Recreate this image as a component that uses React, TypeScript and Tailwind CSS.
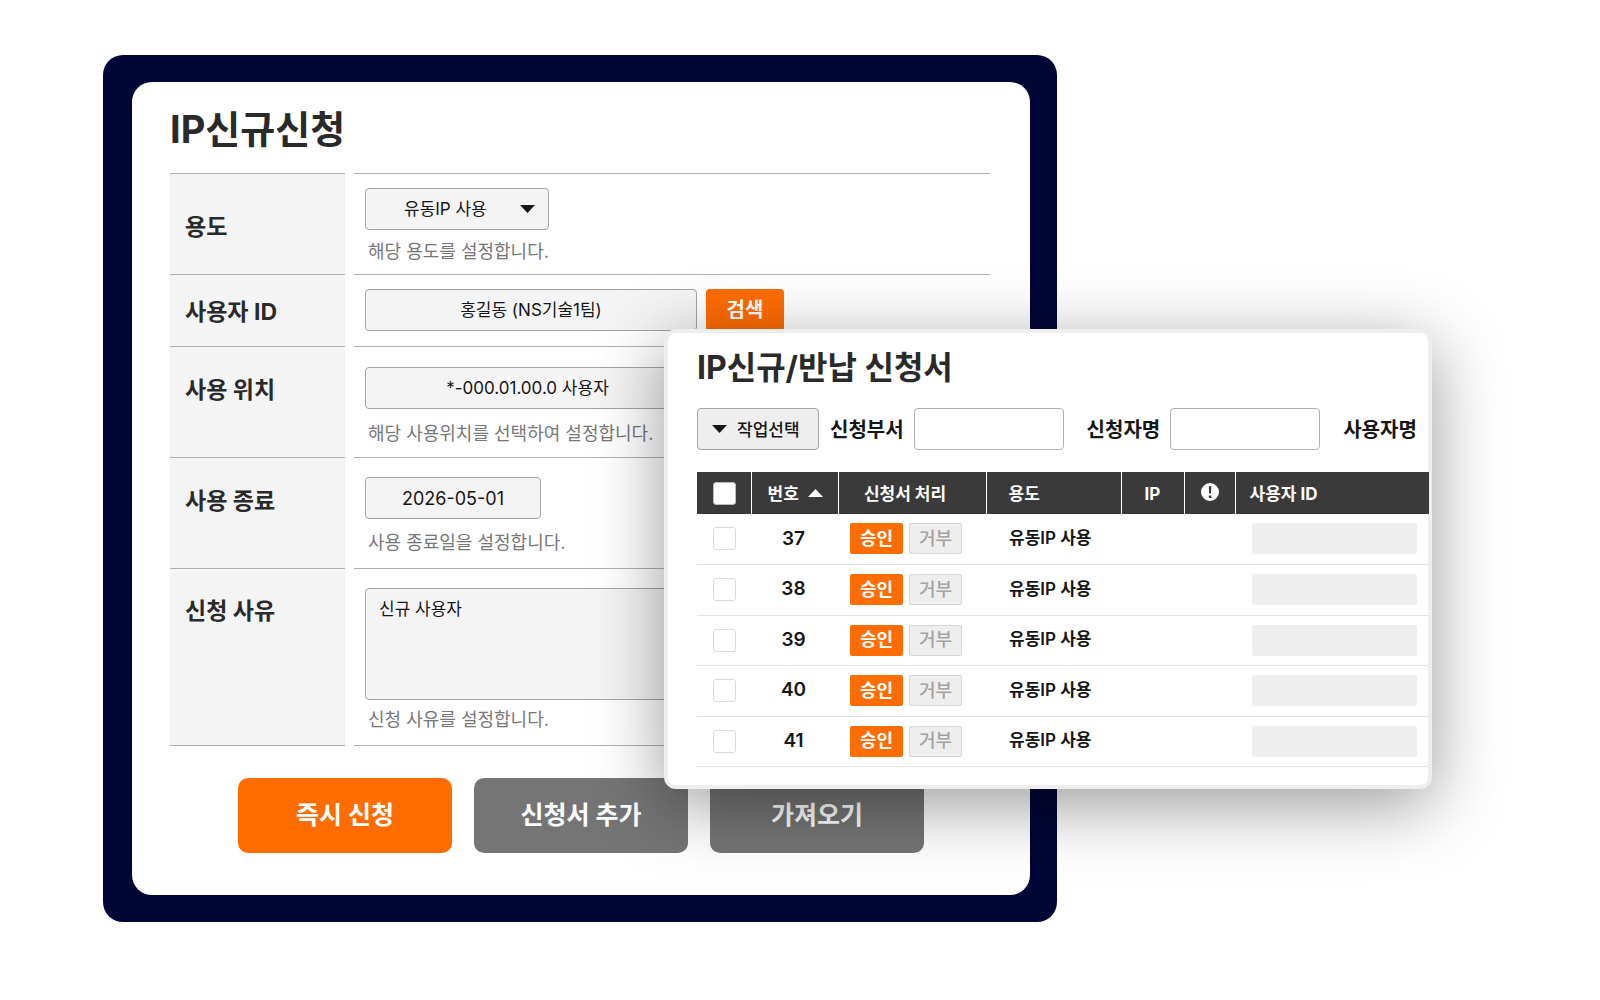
import type { ReactNode } from 'react';
import clsx from 'clsx';

type Request = {
  id: number;
  purpose: string;
};

const REQUESTS: Request[] = [37, 38, 39, 40, 41].map((id) => ({ id, purpose: '유동IP 사용' }));

const fieldClass =
  'h-[42px] rounded border border-[#a3a3a3] bg-[#f4f4f4] text-center text-[#161616] outline-none';

function Triangle({ className }: { className?: string }) {
  return (
    <svg viewBox="0 0 15 8" className={clsx('h-2 w-[15px]', className)} fill="currentColor" aria-hidden="true">
      <path d="M0 0h15L7.5 8z" />
    </svg>
  );
}

type FormRowProps = {
  label: string;
  htmlFor: string;
  labelClass: string;
  bodyClass: string;
  children: ReactNode;
};

function FormRow({ label, htmlFor, labelClass, bodyClass, children }: FormRowProps) {
  return (
    <div className="group flex gap-[9px]">
      <div
        className={clsx(
          'w-[175px] shrink-0 border-t border-[#b0b0b0] bg-[#f4f4f4] pl-[15px] group-last:border-b',
          labelClass
        )}
      >
        <label htmlFor={htmlFor} className="text-[23px] leading-8 font-bold text-[#2a2a2a]">
          {label}
        </label>
      </div>
      <div
        className={clsx('min-w-0 flex-1 border-t border-[#b0b0b0] pl-[11px] group-last:border-b', bodyClass)}
      >
        {children}
      </div>
    </div>
  );
}

function Hint({ className, children }: { className?: string; children: ReactNode }) {
  return <p className={clsx('pl-[3px] text-lg leading-7 text-[#777]', className)}>{children}</p>;
}

function RequestForm() {
  return (
    <section className="rounded-[20px] bg-[#000736] pt-[27px] pr-[27px] pb-[27px] pl-[29px]">
      <form className="rounded-[20px] bg-white pt-[23px] pr-10 pb-[42px] pl-[38px]" onSubmit={(e) => e.preventDefault()}>
        <h1 className="mb-5 text-[38px] leading-[48px] font-bold text-[#2a2a2a]">IP신규신청</h1>

        <div>
          <FormRow label="용도" htmlFor="purpose" labelClass="flex items-center pt-[6px]" bodyClass="pt-[14px] pb-2">
            <div className="relative w-[184px]">
              <select
                id="purpose"
                className="h-[42px] w-full appearance-none rounded border border-[#a3a3a3] bg-[#f4f4f4] pt-[2px] pl-[38px] text-[17px] text-[#161616] outline-none"
              >
                <option>유동IP 사용</option>
              </select>
              <Triangle className="pointer-events-none absolute top-[17px] right-[14px] text-[#161616]" />
            </div>
            <Hint className="mt-2">해당 용도를 설정합니다.</Hint>
          </FormRow>

          <FormRow
            label="사용자 ID"
            htmlFor="user-id"
            labelClass="flex items-center pt-[3px]"
            bodyClass="flex gap-[9px] pt-[14px] pb-[15px]"
          >
            <input
              id="user-id"
              className={clsx(fieldClass, 'w-[332px] pb-1 text-[17px]')}
              defaultValue="홍길동 (NS기술1팀)"
            />
            <button type="button" className="h-[42px] w-[78px] rounded bg-[#ff6c00] text-xl font-bold text-white">
              검색
            </button>
          </FormRow>

          <FormRow label="사용 위치" htmlFor="location" labelClass="pt-[27px]" bodyClass="pt-5 pb-[9px]">
            <input
              id="location"
              className={clsx(fieldClass, 'block w-[325px] pb-1 text-[17px]')}
              defaultValue="*-000.01.00.0 사용자"
            />
            <Hint className="mt-[11px]">해당 사용위치를 선택하여 설정합니다.</Hint>
          </FormRow>

          <FormRow label="사용 종료" htmlFor="end-date" labelClass="pt-[27px]" bodyClass="pt-[19px] pb-[11px]">
            <input id="end-date" className={clsx(fieldClass, 'block w-[176px] text-lg')} defaultValue="2026-05-01" />
            <Hint className="mt-[10px]">사용 종료일을 설정합니다.</Hint>
          </FormRow>

          <FormRow label="신청 사유" htmlFor="reason" labelClass="pt-[26px]" bodyClass="pt-[19px] pb-[11px]">
            <textarea
              id="reason"
              className="block h-28 w-full resize-none rounded border border-[#a3a3a3] bg-[#f4f4f4] px-[13px] py-[6px] text-[17px] leading-7 text-[#161616] outline-none"
              defaultValue="신규 사용자"
            />
            <Hint className="mt-[6px]">신청 사유를 설정합니다.</Hint>
          </FormRow>
        </div>

        <div className="mt-8 flex justify-center gap-[22px] pl-[2px] text-[25px] font-bold text-white">
          <button type="submit" className="h-[75px] w-[214px] rounded-[10px] bg-[#ff6c00]">
            즉시 신청
          </button>
          <button type="button" className="h-[75px] w-[214px] rounded-[10px] bg-[#757575]">
            신청서 추가
          </button>
          <button type="button" className="h-[75px] w-[214px] rounded-[10px] bg-[#757575]">
            가져오기
          </button>
        </div>
      </form>
    </section>
  );
}

function RequestRow({ request }: { request: Request }) {
  return (
    <tr className="border-b border-[#e4e4e4] odd:h-[50px] even:h-[51px]">
      <td className="pl-4">
        <input
          type="checkbox"
          aria-label={`${request.id}`}
          className="block size-[23px] appearance-none rounded-[3px] border border-[#dadada] bg-white"
        />
      </td>
      <td className="pr-[2px] text-center text-[19px] font-semibold">{request.id}</td>
      <td className="pl-3">
        <div className="flex gap-[6px] text-lg">
          <button type="button" className="h-[31px] w-[53px] rounded-[2px] bg-[#ff6c00] font-bold text-white">
            승인
          </button>
          <button
            type="button"
            className="h-[31px] w-[53px] rounded-[2px] border border-[#d6d6d6] bg-[#eee] font-medium text-[#a3a3a3]"
          >
            거부
          </button>
        </div>
      </td>
      <td className="pl-[23px] text-[17px] font-semibold">{request.purpose}</td>
      <td />
      <td />
      <td className="pr-3 pl-[17px]">
        <div className="h-[31px] rounded-[2px] bg-[#eee]" />
      </td>
    </tr>
  );
}

function RequestList() {
  const th = 'border-l border-white p-0 pt-[3px] font-bold';

  return (
    <section className="absolute top-[274px] right-0 left-[561px] rounded-xl border-4 border-[#eee] bg-white pt-[14px] pb-[18px] pl-[29px] text-[#161616] shadow-[0_16px_70px_rgba(0,0,0,0.4)]">
      <h2 className="text-[32px] leading-[42px] font-bold text-[#2a2a2a]">IP신규/반납 신청서</h2>

      <div className="mt-[19px] flex items-center text-xl font-bold whitespace-nowrap">
        <div className="relative w-[122px] shrink-0">
          <select
            aria-label="작업선택"
            className="block h-[42px] w-full appearance-none rounded border border-[#a3a3a3] bg-[#eee] pt-1 pl-[39px] text-[17px] font-medium text-[#161616] outline-none"
          >
            <option>작업선택</option>
          </select>
          <Triangle className="pointer-events-none absolute top-[17px] left-[15px]" />
        </div>
        <label htmlFor="dept" className="ml-[11px] pt-[2px]">
          신청부서
        </label>
        <input
          id="dept"
          className="ml-[10px] h-[42px] w-[150px] rounded border border-[#b0b0b0] bg-white px-3 outline-none"
        />
        <label htmlFor="applicant" className="ml-[23px] pt-[2px]">
          신청자명
        </label>
        <input
          id="applicant"
          className="ml-[10px] h-[42px] w-[150px] rounded border border-[#b0b0b0] bg-white px-3 outline-none"
        />
        <span className="ml-[23px] pt-[2px]">사용자명</span>
      </div>

      <div className="-mr-px">
        <table className="mt-[22px] w-full table-fixed border-collapse text-left">
          <colgroup>
            <col className="w-[54px]" />
            <col className="w-[87px]" />
            <col className="w-[148px]" />
            <col className="w-[135px]" />
            <col className="w-[63px]" />
            <col className="w-[51px]" />
            <col />
          </colgroup>
          <thead>
            <tr className="h-[42px] bg-[#3a3a3a] text-[17px] text-white">
              <th className="p-0 pl-4">
                <input
                  type="checkbox"
                  aria-label="전체 선택"
                  className="block size-[23px] appearance-none rounded-[3px] border border-[#bbb] bg-white"
                />
              </th>
              <th className={th}>
                <div className="flex items-center gap-[9px] pl-4">
                  번호
                  <Triangle className="mb-1 rotate-180" />
                </div>
              </th>
              <th className={clsx(th, 'pr-[14px] text-center')}>신청서 처리</th>
              <th className={th}>
                <span className="pl-[22px]">용도</span>
              </th>
              <th className={clsx(th, 'text-center')}>IP</th>
              <th className="border-l border-white p-0">
                <svg viewBox="0 0 18 18" className="mx-auto mb-[2px] size-[18px]" aria-label="알림">
                  <circle cx="9" cy="9" r="9" fill="#fff" />
                  <path d="M7.8 3.2h2.6l-.4 7.4H8.2zM7.8 12.4h2.6v2.6H7.8z" fill="#3a3a3a" />
                </svg>
              </th>
              <th className={th}>
                <span className="pl-[14px]">사용자 ID</span>
              </th>
            </tr>
          </thead>
          <tbody>
            {REQUESTS.map((request) => (
              <RequestRow key={request.id} request={request} />
            ))}
          </tbody>
        </table>
      </div>
    </section>
  );
}

export default function App() {
  return (
    <main className="min-h-screen bg-white pt-[55px] pr-[168px] pb-[77px] pl-[103px] font-['Inter','Noto_Sans_CJK_KR',sans-serif]">
      <div className="relative">
        <div className="mr-[375px]">
          <RequestForm />
        </div>
        <RequestList />
      </div>
    </main>
  );
}
